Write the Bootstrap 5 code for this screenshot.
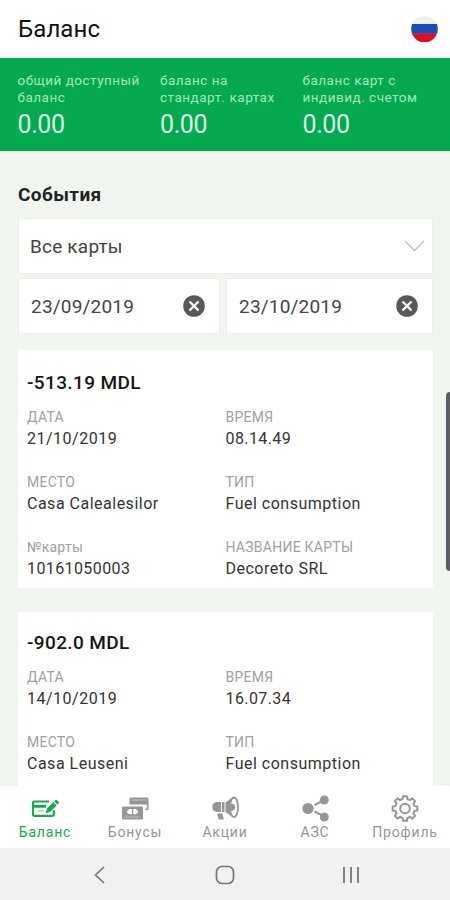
<!DOCTYPE html>
<html lang="ru">
<head>
<meta charset="utf-8">
<meta name="viewport" content="width=device-width, initial-scale=1">
<title>Баланс</title>
<link href="https://cdn.jsdelivr.net/npm/bootstrap@5.3.0/dist/css/bootstrap.min.css" rel="stylesheet">
<style>
body{font-family:Roboto,sans-serif;background:#f0f5f0;color:#222;width:450px}
svg{display:block;flex:none}
.screen{height:900px}
.topbar{height:58px;padding:0 12px 0 18px}
.topbar h1{font-size:24px;font-weight:400;color:#111;letter-spacing:.1px;line-height:28px}
.summary{height:93px;background:#04a84f;padding:14px 0 0 17.5px}
.summary .cell{width:142.5px}
.summary .cap{font-size:13.5px;line-height:17px;color:#a5e8bd;letter-spacing:.5px;white-space:nowrap}
.summary .sum{font-size:25px;line-height:28px;color:#d9fbe5;margin-top:5px;letter-spacing:-.4px}
.events{padding:0 17px 0 18px}
.events h2{font-size:19px;font-weight:700;line-height:24px;letter-spacing:.4px;margin:32px 0 11px}
.field{background:#fff;border:1px solid #eaefea;height:56px;font-size:19px;color:#444;letter-spacing:.2px;padding:0 14px 0 12px}
.field span{padding-top:2px}
.field.pick{padding-right:7px;padding-left:11px}
.dates{margin-top:4px}
.from{width:202px}.till{width:207px}
.entry{background:#fff;height:238px;padding:21px 9px 0}
.entry + .entry{margin-top:24px;padding-top:19px}
.entry h3{font-size:19px;font-weight:500;line-height:24px;margin:0 0 12px;letter-spacing:.38px;color:#151515}
.pair{height:65px}
.pair > div{width:199px}
.lbl{font-size:14px;line-height:20px;color:#a0a0a0;letter-spacing:.25px}
.val{font-size:16px;line-height:23px;color:#333;letter-spacing:.5px}
.val.code{letter-spacing:.4px}
.tabs{height:62px}
.tab{width:90px;color:#969696;font-size:14px;line-height:18px;letter-spacing:.8px;padding-top:7px}
.tab.active{color:#18a754}
.sysbar{height:52px;background:#f1f1f1;color:#777;padding:2px 90px 0 90px}
.thumb{right:0;top:392px;width:4px;height:179px;background:#5e5c66;border-radius:4px 0 0 4px}
</style>
<script src="https://cdn.jsdelivr.net/npm/bootstrap@5.3.0/dist/js/bootstrap.bundle.min.js"></script>
</head>
<body>
<div class="screen d-flex flex-column position-relative overflow-hidden">
  <header class="topbar bg-white d-flex align-items-center justify-content-between flex-shrink-0">
    <h1 class="m-0">Баланс</h1>
    <svg width="27" height="28" viewBox="0 0 27 27"><defs><clipPath id="disc"><circle cx="13.500" cy="13.500" r="13.300"/></clipPath></defs><g clip-path="url(#disc)"><path fill="#f0f0f0" d="M0 0h27v9H0z"/><path fill="#1550b8" d="M0 8.500h27v9.700H0z"/><path fill="#d91127" d="M0 17.700h27V27H0z"/></g></svg>
  </header>
  <section class="summary d-flex flex-shrink-0">
    <div class="cell"><div class="cap">общий доступный<br>баланс</div><div class="sum">0.00</div></div>
    <div class="cell"><div class="cap">баланс на<br>стандарт. картах</div><div class="sum">0.00</div></div>
    <div class="cell"><div class="cap">баланс карт с<br>индивид. счетом</div><div class="sum">0.00</div></div>
  </section>
  <main class="events flex-grow-1 overflow-hidden">
    <h2>События</h2>
    <div class="field pick d-flex align-items-center justify-content-between"><span>Все карты</span>
      <svg width="21" height="12" viewBox="0 0 21 12"><path d="M1 1l9.500 9.500L20 1" fill="none" stroke="#bdbdbd" stroke-width="1.300"/></svg></div>
    <div class="dates d-flex justify-content-between">
      <div class="field from d-flex align-items-center justify-content-between"><span>23/09/2019</span><svg width="22" height="22" viewBox="0 0 22 22"><circle cx="11" cy="11" r="10.800" fill="#585858"/><path d="M6.500 6.500l9 9m0-9l-9 9" stroke="#fff" stroke-width="2.400"/></svg></div>
      <div class="field till d-flex align-items-center justify-content-between"><span>23/10/2019</span><svg width="22" height="22" viewBox="0 0 22 22"><circle cx="11" cy="11" r="10.800" fill="#585858"/><path d="M6.500 6.500l9 9m0-9l-9 9" stroke="#fff" stroke-width="2.400"/></svg></div>
    </div>
    <article class="entry mt-3">
      <h3>-513.19 MDL</h3>
      <div class="pair d-flex"><div><div class="lbl">ДАТА</div><div class="val">21/10/2019</div></div><div><div class="lbl">ВРЕМЯ</div><div class="val code">08.14.49</div></div></div>
      <div class="pair d-flex"><div><div class="lbl">МЕСТО</div><div class="val">Casa Calealesilor</div></div><div><div class="lbl">ТИП</div><div class="val">Fuel consumption</div></div></div>
      <div class="pair d-flex"><div><div class="lbl">№карты</div><div class="val code">10161050003</div></div><div><div class="lbl">НАЗВАНИЕ КАРТЫ</div><div class="val">Decoreto SRL</div></div></div>
    </article>
    <article class="entry">
      <h3>-902.0 MDL</h3>
      <div class="pair d-flex"><div><div class="lbl">ДАТА</div><div class="val">14/10/2019</div></div><div><div class="lbl">ВРЕМЯ</div><div class="val code">16.07.34</div></div></div>
      <div class="pair d-flex"><div><div class="lbl">МЕСТО</div><div class="val">Casa Leuseni</div></div><div><div class="lbl">ТИП</div><div class="val">Fuel consumption</div></div></div>
    </article>
  </main>
  <nav class="tabs bg-white d-flex flex-shrink-0">
    <div class="tab active d-flex flex-column align-items-center"><svg width="30" height="30" viewBox="0 0 30 30"><path d="M19 8.500H4.500Q3 8.500 3 10v11Q3 22.800 4.500 22.800H22q1.800 0 1.800-1.500v-4" fill="none" stroke="currentColor" stroke-width="2.200"/><path d="M3 13.300h13" stroke="currentColor" stroke-width="2.800"/><path d="M7.500 18h7" stroke="currentColor" stroke-width="1.300" opacity=".5"/><path d="M15.500 20.500l1.500-5 6.400-6.400 3.300 3.300-6.400 6.400zM24.200 8.300l1.900-1.900 3.200 3.100-1.900 2z" fill="currentColor"/></svg><span>Баланс</span></div>
    <div class="tab d-flex flex-column align-items-center"><svg width="30" height="30" viewBox="0 0 30 30"><path d="M9.500 11.500V6q0-1.500 1.500-1.500h16q1.500 0 1.500 1.500v10q0 1.300-1.300 1.300H25.500v-1.700h1.300v-4.100z" fill="currentColor"/><path d="M11 7h16" stroke="#fff" stroke-width=".7" opacity=".6"/><rect x="2" y="13.500" width="21" height="13" rx="1.200" fill="currentColor"/><path d="M12 16H9.500q-2.500 1-2.500 2.700T9.500 21.300H12zM13.200 16h2.500q2.300 1 2.300 2.700t-2.300 2.600h-2.500z" fill="#fff"/><path d="M5.500 24h14" stroke="#fff" stroke-width=".8" opacity=".5"/></svg><span>Бонусы</span></div>
    <div class="tab d-flex flex-column align-items-center"><svg width="30" height="30" viewBox="0 0 30 30"><path d="M6.500 9H11v10H6.500Q2.300 18 2.300 14T6.500 9zM12 9h2.500v10H12zM7 20.500h5.500l1.300 6H8.800z" fill="currentColor"/><path d="M15.500 9.500L23 4v20.500L15.500 19z" fill="currentColor"/><ellipse cx="24" cy="14.200" rx="4" ry="9.700" fill="#fff" stroke="currentColor" stroke-width="1.800"/><path d="M20.500 10.500q4.800 0 4.800 3.700t-4.800 3.700z" fill="currentColor"/></svg><span>Акции</span></div>
    <div class="tab d-flex flex-column align-items-center"><svg width="30" height="30" viewBox="0 0 30 30"><path d="M14.500 12l9-4.500M14.500 18.500l9 4.500" stroke="currentColor" stroke-width="2"/><circle cx="8" cy="15.500" r="5.600" fill="currentColor"/><circle cx="24.300" cy="7" r="4.500" fill="currentColor"/><circle cx="24.300" cy="24" r="4.500" fill="currentColor"/></svg><span>АЗС</span></div>
    <div class="tab d-flex flex-column align-items-center"><svg width="30" height="30" viewBox="-15 -15.500 30 30"><g fill="none" stroke="currentColor" stroke-width="2" stroke-linejoin="round"><circle r="4.800"/><path d="M9.510-2.370L12.350-1.960V1.960L9.510 2.370 8.400 5.050 10.120 7.350 7.350 10.120 5.050 8.400 2.370 9.510 1.960 12.350H-1.960L-2.370 9.510-5.050 8.400-7.350 10.120-10.120 7.350-8.400 5.050-9.510 2.370-12.350 1.960V-1.960L-9.510-2.370-8.400-5.050-10.120-7.350-7.350-10.120-5.050-8.400-2.370-9.510-1.960-12.350H1.960L2.370-9.510 5.050-8.400 7.350-10.120 10.120-7.350 8.400-5.050z"/></g></svg><span>Профиль</span></div>
  </nav>
  <footer class="sysbar d-flex align-items-center justify-content-between flex-shrink-0">
    <svg width="18" height="20" viewBox="0 0 18 20"><path d="M14 2L5.500 10l8.500 8" fill="none" stroke="currentColor" stroke-width="1.700"/></svg>
    <svg width="20" height="20" viewBox="0 0 20 20"><rect x="1.500" y="1.500" width="17" height="17" rx="5.500" fill="none" stroke="currentColor" stroke-width="1.700"/></svg>
    <svg width="18" height="20" viewBox="0 0 18 20"><path d="M2 2v16M9 2v16M16 2v16" stroke="currentColor" stroke-width="1.800"/></svg>
  </footer>
  <div class="thumb position-absolute"></div>
</div>
</body>
</html>
